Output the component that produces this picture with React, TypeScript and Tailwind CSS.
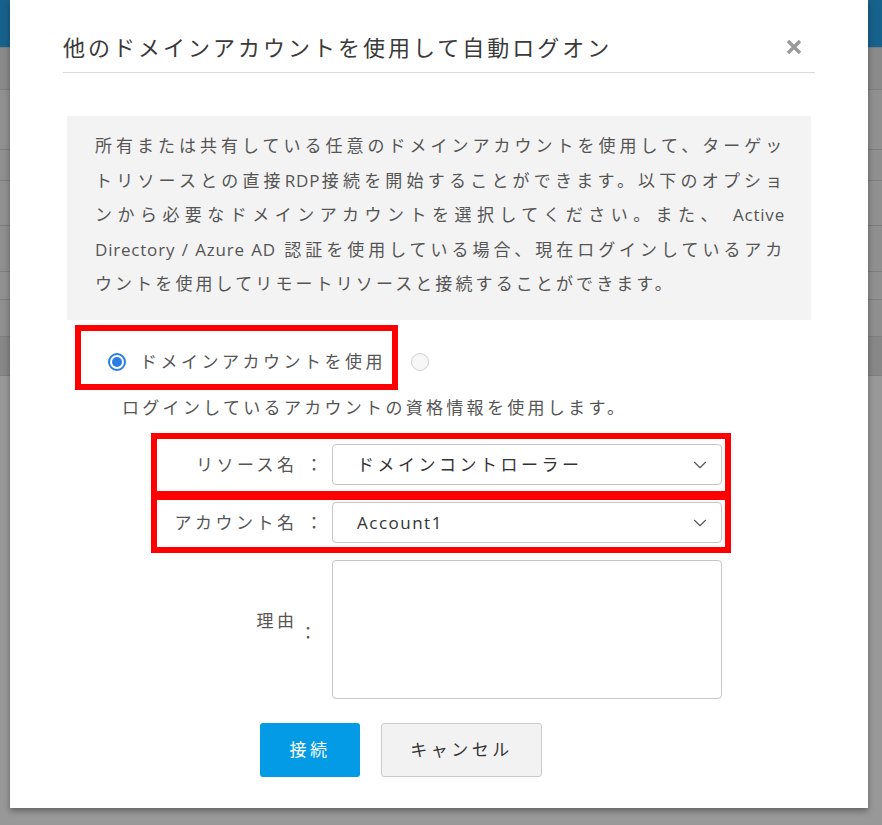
import { ChevronDown } from 'lucide-react'

// app behind the overlay (only the edges show)
const bgRows = [
  { h: 48, c: 'bg-[#17628c]' },
  { h: 42, c: 'bg-[#8a8a8a]' },
  { h: 60, c: 'bg-[#909090]' },
  { h: 31, c: 'bg-[#8f8f8f]' },
  { h: 45, c: 'bg-[#909090]' },
  { h: 46, c: 'bg-[#8f8f8f]' },
  { h: 28, c: 'bg-[#909090]' },
  { h: 37, c: 'bg-[#8f8f8f]' },
  { h: 39, c: 'bg-[#878787]' },
]

function Radio({ checked }: { checked?: boolean }) {
  if (checked) {
    return (
      <span className="flex h-[18px] w-[18px] items-center justify-center rounded-full border-2 border-[#2b7de3] bg-white">
        <span className="h-[10px] w-[10px] rounded-full bg-[#2b7de3]" />
      </span>
    )
  }
  return <span className="block h-[18px] w-[18px] rounded-full border border-[#cfcfcf] bg-[#f7f7f7]" />
}

function SelectBox({ children }: { children: React.ReactNode }) {
  return (
    <div className="flex h-[41px] w-[390px] items-center justify-between rounded-[4px] border border-[#c6c6c6] bg-white pl-[24px] pr-[10px] text-[17px] text-[#333]">
      <span>{children}</span>
      <ChevronDown size={22} strokeWidth={1.2} className="text-[#555]" />
    </div>
  )
}

export default function App() {
  return (
    <div className="relative h-[825px] w-[882px] overflow-hidden bg-[#989898] font-['Open_Sans','Noto_Sans_CJK_JP',sans-serif] tracking-[3.5px]">
      <div className="flex flex-col">
        {bgRows.map((r, i) => (
          <div key={i} className={`${r.c} border-b border-[#7e7e7e]`} style={{ height: r.h }} />
        ))}
      </div>

      {/* modal */}
      <div className="absolute left-[10px] top-0 flex h-[808px] w-[858px] flex-col bg-white shadow-[0_3px_6px_rgba(0,0,0,0.35)]">
        <div className="mx-[53px] flex h-[73px] items-start justify-between border-b border-[#dcdcdc] pr-[13px] pt-[31px]">
          <h1 className="text-[22px] leading-[32px] tracking-[3px] text-[#3a3a3a]">他のドメインアカウントを使用して自動ログオン</h1>
          <svg width="16" height="16" viewBox="0 0 16 16" className="mt-[8px]">
            <path d="M2 2 14 14M14 2 2 14" stroke="#9a9a9a" strokeWidth="3.4" />
          </svg>
        </div>

        <div className="mx-[57px] mt-[43px] h-[204px] whitespace-nowrap bg-[#f3f3f3] pl-[28px] pr-[26px] pt-[13px] text-[17px] leading-[34.5px] tracking-[2.7px] text-[#555]">
          <p className="text-justify [text-align-last:justify]">所有または共有している任意のドメインアカウントを使用して、ターゲッ</p>
          <p className="text-justify [text-align-last:justify]">
            トリソースとの直接<span className="tracking-[0.8px]">RDP</span>接続を開始することができます。以下のオプショ
          </p>
          <p className="text-justify [text-align-last:justify]">
            ンから必要なドメインアカウントを選択してください。また、 <span className="tracking-[0.8px]">Active</span>
          </p>
          <p className="text-justify [text-align-last:justify]">
            <span className="tracking-[0.8px]">Directory / Azure AD</span> 認証を使用している場合、現在ログインしているアカ
          </p>
          <p className="tracking-[3.1px]">ウントを使用してリモートリソースと接続することができます。</p>
        </div>

        <div className="ml-[65px] mt-[5px] flex items-center gap-[13px]">
          <div className="flex h-[65px] items-center gap-[14px] border-[6px] border-[#ff0000] pl-[27px] pr-[6px] pt-[8px]">
            <Radio checked />
            <span className="text-[17px] text-[#555]">ドメインアカウントを使用</span>
          </div>
          <div className="pt-[8px]">
            <Radio />
          </div>
        </div>

        <p className="ml-[112px] mt-[6px] text-[17px] leading-[24px] tracking-[3.3px] text-[#555]">ログインしているアカウントの資格情報を使用します。</p>

        <div className="ml-[141px] mt-[13px] flex w-[580px] flex-col">
          <div className="flex items-center border-[6px] border-[#ff0000] pb-[6px] pr-[3px] pt-[5px]">
            <span className="w-[169px] text-right text-[17px] text-[#555]">リソース名 ：</span>
            <span className="ml-[6px]">
              <SelectBox>ドメインコントローラー</SelectBox>
            </span>
          </div>
          <div className="-mt-[3px] flex items-center border-[6px] border-[#ff0000] pb-[4px] pr-[3px] pt-[2px]">
            <span className="w-[169px] text-right text-[17px] text-[#555]">アカウント名 ：</span>
            <span className="ml-[6px]">
              <SelectBox>
                <span className="tracking-[1.5px]">Account1</span>
              </SelectBox>
            </span>
          </div>
        </div>

        <div className="ml-[147px] mt-[7px] flex">
          <div className="flex w-[163px] justify-end pt-[48px] text-[17px] text-[#555]">
            <span className="pr-[2px]">理由</span>
            <span className="pt-[12px]">：</span>
          </div>
          <textarea className="ml-[12px] h-[139px] w-[390px] resize-none rounded-[4px] border border-[#c6c6c6] bg-white" />
        </div>

        <div className="ml-[250px] mt-[24px] flex gap-[21px]">
          <button className="h-[54px] w-[100px] rounded-[3px] bg-[#039be5] text-[17px] text-white">接続</button>
          <button className="h-[54px] w-[161px] rounded-[3px] border border-[#cccccc] bg-[#f2f2f2] text-[17px] text-[#333]">キャンセル</button>
        </div>
      </div>
    </div>
  )
}
